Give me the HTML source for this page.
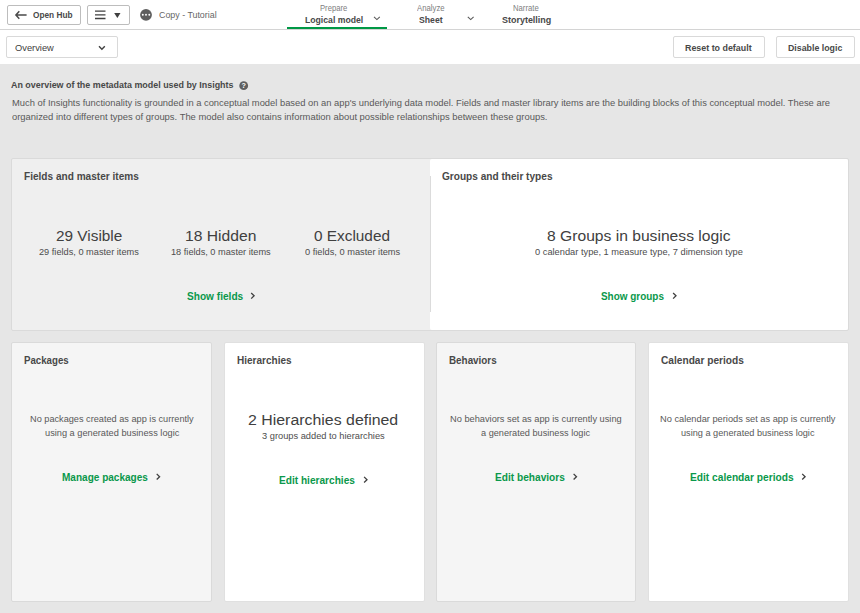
<!DOCTYPE html>
<html lang="en">
<head>
<meta charset="utf-8">
<title>Logical model - Overview</title>
<style>
*{box-sizing:border-box;margin:0;padding:0}
html,body{width:860px;height:613px;overflow:hidden;background:#e6e6e6;font-family:"Liberation Sans",sans-serif;color:#404040}
.abs{position:absolute}
#top{position:absolute;left:0;top:0;width:860px;height:30px;background:#fff;border-bottom:1px solid #d4d4d4}
#sub{position:absolute;left:0;top:30px;width:860px;height:34px;background:#fff}
.btn{position:absolute;border:1px solid #bdbdbd;border-radius:2px;background:#fff}
.btn2{position:absolute;border:1px solid #d9d9d9;border-radius:2px;background:#fff}
.t{position:absolute;white-space:nowrap;line-height:1;transform-origin:0 0}
.b{font-weight:bold}
.card{position:absolute;border:1px solid #dadada;border-radius:2px}
svg{position:absolute;overflow:visible}
</style>
</head>
<body>
<div id="top"></div>
<div id="sub"></div>
<div class="btn" style="left:7px;top:5px;width:74px;height:20px"></div>
<div class="btn" style="left:87px;top:5px;width:43px;height:20px"></div>
<div class="abs" style="left:287px;top:27px;width:100px;height:2px;background:#009845"></div>
<div class="btn2" style="left:6px;top:36px;width:112px;height:22px"></div>
<div class="btn2" style="left:673px;top:36px;width:92px;height:22px"></div>
<div class="btn2" style="left:776px;top:36px;width:79px;height:22px"></div>

<div class="card" style="left:11px;top:158px;width:838px;height:173px;background:#efefef"></div>
<div class="abs" style="left:430px;top:159px;width:418px;height:171px;background:#fff;border-radius:2px"></div>
<div class="abs" style="left:430px;top:176px;width:1px;height:136px;background:#dbdbdb"></div>

<div class="card" style="left:11px;top:342px;width:201px;height:260px;background:#f5f5f5"></div>
<div class="card" style="left:224px;top:342px;width:201px;height:260px;background:#fff;border-color:#e0e0e0"></div>
<div class="card" style="left:436px;top:342px;width:200px;height:260px;background:#f5f5f5"></div>
<div class="card" style="left:648px;top:342px;width:201px;height:260px;background:#fff;border-color:#e0e0e0"></div>

<div class="t b" id="t_openhub" style="left:33.4px;top:10px;font-size:9.5px;color:#484848;transform:scaleX(0.8702)">Open Hub</div>
<div class="t" id="t_copy" style="left:159.0px;top:11px;font-size:9.3px;color:#666666;transform:scaleX(0.9528)">Copy - Tutorial</div>
<div class="t" id="t_prepare" style="left:320.0px;top:5px;font-size:8.2px;color:#808080;transform:scaleX(0.9368)">Prepare</div>
<div class="t b" id="t_logical" style="left:305.4px;top:15px;font-size:9.6px;color:#484848;transform:scaleX(0.9021)">Logical model</div>
<div class="t" id="t_analyze" style="left:416.6px;top:5px;font-size:8.2px;color:#808080;transform:scaleX(0.9506)">Analyze</div>
<div class="t b" id="t_sheet" style="left:419.2px;top:15px;font-size:9.6px;color:#484848;transform:scaleX(0.9028)">Sheet</div>
<div class="t" id="t_narrate" style="left:513.3px;top:5px;font-size:8.2px;color:#808080;transform:scaleX(0.9410)">Narrate</div>
<div class="t b" id="t_story" style="left:502.2px;top:15px;font-size:9.6px;color:#484848;transform:scaleX(0.9340)">Storytelling</div>
<div class="t" id="t_overview" style="left:14.8px;top:43px;font-size:9.8px;color:#404040;transform:scaleX(0.9500)">Overview</div>
<div class="t b" id="t_reset" style="left:685.2px;top:43px;font-size:9.6px;color:#484848;transform:scaleX(0.9254)">Reset to default</div>
<div class="t b" id="t_disable" style="left:787.7px;top:43px;font-size:9.6px;color:#484848;transform:scaleX(0.9174)">Disable logic</div>
<div class="t b" id="t_head" style="left:11.1px;top:80px;font-size:9.6px;color:#484848;transform:scaleX(0.9295)">An overview of the metadata model used by Insights</div>
<div class="t" id="t_p1" style="left:11.8px;top:99px;font-size:8.7px;color:#595959;transform:scaleX(1.0774)">Much of Insights functionality is grounded in a conceptual model based on an app&#x27;s underlying data model. Fields and master library items are the building blocks of this conceptual model. These are</div>
<div class="t" id="t_p2" style="left:11.8px;top:113px;font-size:8.7px;color:#595959;transform:scaleX(1.0835)">organized into different types of groups. The model also contains information about possible relationships between these groups.</div>
<div class="t b" id="t_fields" style="left:24.3px;top:172px;font-size:10.3px;color:#484848;transform:scaleX(0.9785)">Fields and master items</div>
<div class="t b" id="t_groups" style="left:442.1px;top:172px;font-size:10.3px;color:#484848;transform:scaleX(0.9803)">Groups and their types</div>
<div class="t" id="t_vis" style="left:56.0px;top:228px;font-size:15.4px;color:#404040;transform:scaleX(0.9975)">29 Visible</div>
<div class="t" id="t_vis2" style="left:39.3px;top:247px;font-size:9.5px;color:#4d4d4d;transform:scaleX(0.9692)">29 fields, 0 master items</div>
<div class="t" id="t_hid" style="left:185.1px;top:228px;font-size:15.4px;color:#404040;transform:scaleX(1.0189)">18 Hidden</div>
<div class="t" id="t_hid2" style="left:171.2px;top:247px;font-size:9.5px;color:#4d4d4d;transform:scaleX(0.9683)">18 fields, 0 master items</div>
<div class="t" id="t_exc" style="left:314.2px;top:228px;font-size:15.4px;color:#404040;transform:scaleX(0.9979)">0 Excluded</div>
<div class="t" id="t_exc2" style="left:304.8px;top:247px;font-size:9.5px;color:#4d4d4d;transform:scaleX(0.9747)">0 fields, 0 master items</div>
<div class="t b" id="t_showf" style="left:186.6px;top:291px;font-size:10.5px;color:#0a984b;transform:scaleX(0.9633)">Show fields</div>
<div class="t" id="t_grp" style="left:546.8px;top:228px;font-size:15.4px;color:#404040;transform:scaleX(1.0165)">8 Groups in business logic</div>
<div class="t" id="t_grp2" style="left:534.6px;top:247px;font-size:9.5px;color:#4d4d4d;transform:scaleX(0.9768)">0 calendar type, 1 measure type, 7 dimension type</div>
<div class="t b" id="t_showg" style="left:600.9px;top:291px;font-size:10.5px;color:#0a984b;transform:scaleX(0.9459)">Show groups</div>
<div class="t b" id="t_pk" style="left:24.3px;top:356px;font-size:10.3px;color:#484848;transform:scaleX(0.9404)">Packages</div>
<div class="t" id="t_pk1" style="left:29.9px;top:415px;font-size:8.7px;color:#595959;transform:scaleX(1.0560)">No packages created as app is currently</div>
<div class="t" id="t_pk2" style="left:44.5px;top:429px;font-size:8.7px;color:#595959;transform:scaleX(1.0613)">using a generated business logic</div>
<div class="t b" id="t_pk3" style="left:62.2px;top:472px;font-size:10.5px;color:#0a984b;transform:scaleX(0.9556)">Manage packages</div>
<div class="t b" id="t_hi" style="left:236.6px;top:356px;font-size:10.3px;color:#484848;transform:scaleX(0.9731)">Hierarchies</div>
<div class="t" id="t_hi1" style="left:248.4px;top:412px;font-size:15.4px;color:#404040;transform:scaleX(1.0327)">2 Hierarchies defined</div>
<div class="t" id="t_hi2" style="left:262.4px;top:431px;font-size:9.5px;color:#4d4d4d;transform:scaleX(0.9761)">3 groups added to hierarchies</div>
<div class="t b" id="t_hi3" style="left:279.4px;top:475px;font-size:10.5px;color:#0a984b;transform:scaleX(0.9634)">Edit hierarchies</div>
<div class="t b" id="t_be" style="left:448.7px;top:356px;font-size:10.3px;color:#484848;transform:scaleX(0.9579)">Behaviors</div>
<div class="t" id="t_be1" style="left:450.4px;top:415px;font-size:8.7px;color:#595959;transform:scaleX(1.0645)">No behaviors set as app is currently using</div>
<div class="t" id="t_be2" style="left:481.3px;top:429px;font-size:8.7px;color:#595959;transform:scaleX(1.0546)">a generated business logic</div>
<div class="t b" id="t_be3" style="left:494.8px;top:472px;font-size:10.5px;color:#0a984b;transform:scaleX(0.9660)">Edit behaviors</div>
<div class="t b" id="t_ca" style="left:660.6px;top:356px;font-size:10.3px;color:#484848;transform:scaleX(0.9854)">Calendar periods</div>
<div class="t" id="t_ca1" style="left:660.4px;top:415px;font-size:8.7px;color:#595959;transform:scaleX(1.0651)">No calendar periods set as app is currently</div>
<div class="t" id="t_ca2" style="left:681.1px;top:429px;font-size:8.7px;color:#595959;transform:scaleX(1.0549)">using a generated business logic</div>
<div class="t b" id="t_ca3" style="left:690.0px;top:472px;font-size:10.5px;color:#0a984b;transform:scaleX(0.9702)">Edit calendar periods</div>
<svg style="left:0;top:0" width="860" height="613" viewBox="0 0 860 613">
<path d="M19.3 11.2 L15.9 15 L19.3 18.8 M16 15 H26.6" fill="none" stroke="#4a4a4a" stroke-width="1.5"/>
<path d="M95 11.1 H105.5 M95 14.8 H105.5 M95 18.5 H105.5" fill="none" stroke="#404040" stroke-width="1.35"/>
<path d="M114.2 13.1 H120.5 L117.35 17.9 Z" fill="#404040"/>
<circle cx="146" cy="14.8" r="5.9" fill="#5e5e5e"/><circle cx="142.8" cy="14.8" r="0.95" fill="#fff"/><circle cx="146" cy="14.8" r="0.95" fill="#fff"/><circle cx="149.3" cy="14.8" r="0.95" fill="#fff"/>
<path d="M374.00 16.90 L376.90 19.60 L379.80 16.90" fill="none" stroke="#595959" stroke-width="1.1"/>
<path d="M467.80 16.90 L470.70 19.60 L473.60 16.90" fill="none" stroke="#595959" stroke-width="1.1"/>
<path d="M99.00 46.20 L101.90 49.20 L104.80 46.20" fill="none" stroke="#404040" stroke-width="1.4"/>
<circle cx="243.7" cy="85.7" r="4.4" fill="#606060"/><text x="243.7" y="88.3" font-size="7.2" font-weight="bold" fill="#fff" text-anchor="middle" font-family="Liberation Sans, sans-serif">?</text>
<path d="M251.20 293.00 L254.10 295.80 L251.20 298.60" fill="none" stroke="#404040" stroke-width="1.3"/>
<path d="M673.10 293.00 L676.00 295.80 L673.10 298.60" fill="none" stroke="#404040" stroke-width="1.3"/>
<path d="M156.70 473.90 L159.60 476.70 L156.70 479.50" fill="none" stroke="#404040" stroke-width="1.3"/>
<path d="M364.10 476.90 L367.00 479.70 L364.10 482.50" fill="none" stroke="#404040" stroke-width="1.3"/>
<path d="M573.60 473.90 L576.50 476.70 L573.60 479.50" fill="none" stroke="#404040" stroke-width="1.3"/>
<path d="M802.20 473.90 L805.10 476.70 L802.20 479.50" fill="none" stroke="#404040" stroke-width="1.3"/>
</svg>
</body>
</html>
